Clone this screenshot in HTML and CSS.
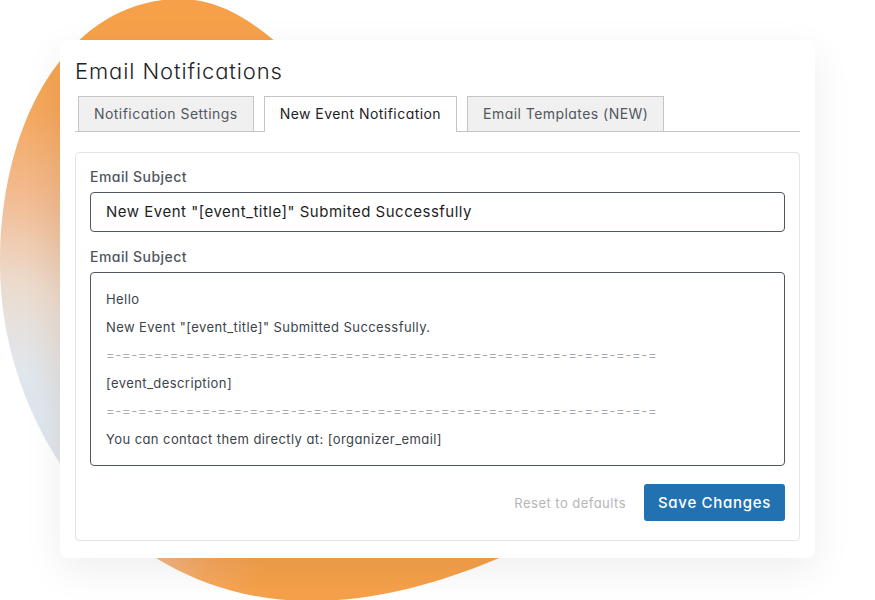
FILE: index.html
```html
<!DOCTYPE html>
<html lang="en">

<head>
    <meta charset="UTF-8">
    <meta name="viewport" content="width=device-width, initial-scale=1.0">
    <title>Email Notifications</title>

    <link rel="stylesheet" href="styles.css">
</head>

<body>
    <div class="page">
        <!-- the orange blob that sits behind the settings card -->
        <svg class="blob" viewBox="0 0 875 600" width="875" height="600" xmlns="http://www.w3.org/2000/svg">
            <defs>
                <radialGradient id="blob-fill" gradientUnits="userSpaceOnUse" cx="0" cy="430" r="280"
                    gradientTransform="translate(0 430) scale(1 1.4) translate(0 -430)">
                    <stop offset="0" stop-color="#dbe5ef" />
                    <stop offset="0.18" stop-color="#e0e6ec" />
                    <stop offset="0.38" stop-color="#ecdbcd" />
                    <stop offset="0.6" stop-color="#f2bb91" />
                    <stop offset="0.82" stop-color="#f5a85e" />
                    <stop offset="1" stop-color="#f6a14a" />
                </radialGradient>
            </defs>
            <path d="M180 -1 C75 -1 0 110 0 265 C0 420 110 600 310 601 C390 601 470 575 560 530 C680 450 600 250 420 150 C320 110 270 -1 180 -1 Z" fill="url(#blob-fill)" />
        </svg>

        <div class="card">
            <h1 class="card-title">Email Notifications</h1>

            <!-- tab strip, the active one joins the panel below -->
            <div class="tabs">
                <div class="tab">Notification Settings</div>
                <div class="tab tab-active">New Event Notification</div>
                <div class="tab">Email Templates (NEW)</div>
            </div>

            <div class="panel">
                <div class="field-label">Email Subject</div>
                <div class="field-input">New Event "[event_title]" Submited Successfully</div>

                <div class="field-label field-label-second">Email Subject</div>
                <div class="field-body">
                    <div class="body-line">Hello</div>
                    <div class="body-line">New Event "[event_title]" Submitted Successfully.</div>
                    <div class="body-line body-rule">=-=-=-=-=-=-=-=-=-=-=-=-=-=-=-=-=-=-=-=-=-=-=-=-=-=-=-=-=-=-=-=-=-=-=</div>
                    <div class="body-line">[event_description]</div>
                    <div class="body-line body-rule">=-=-=-=-=-=-=-=-=-=-=-=-=-=-=-=-=-=-=-=-=-=-=-=-=-=-=-=-=-=-=-=-=-=-=</div>
                    <div class="body-line">You can contact them directly at: [organizer_email]</div>
                </div>

                <div class="panel-footer">
                    <span class="reset-link">Reset to defaults</span>
                    <button class="save-button">Save Changes</button>
                </div>
            </div>
        </div>
    </div>
</body>

</html>
```

FILE: styles.css
```css
/* root styles */
body, html {
    margin: 0;
    height: 100%;
    background: #fff;
    font-family: "Inter", "Noto Sans", sans-serif;
    font-feature-settings: "cv11";
}

.page {
    position: relative;
    width: 875px;
    height: 600px;
    overflow: hidden;
    padding-top: 40px;
    box-sizing: border-box;
}

/* decorative background shape */
.blob {
    position: absolute;
    top: 0;
    left: 0;
    z-index: 0;
}

/* the white settings card */
.card {
    position: relative;
    z-index: 1;
    margin-left: 60px;
    width: 755px;
    height: 518px;
    box-sizing: border-box;
    padding: 16px 15px 0 15px;
    background: #fff;
    border-radius: 8px;
    box-shadow: 0 12px 40px rgba(0, 0, 0, .07);
}

.card-title {
    margin: 0;
    font-size: 22px;
    line-height: 30px;
    font-weight: 300;
    letter-spacing: .9px;
    color: #1d2327;
}

/* tabs */
.tabs {
    display: flex;
    gap: 10px;
    margin-top: 10px;
    padding-left: 3px;
    border-bottom: 1px solid #c3c4c7;
}

.tab {
    height: 34px;
    line-height: 34px;
    padding: 0 15px;
    border: 1px solid #c3c4c7;
    border-bottom: 0;
    background: #f0f0f1;
    color: #50575e;
    font-size: 14px;
    font-weight: 400;
    letter-spacing: .45px;
}

.tab-active {
    background: #fff;
    color: #1d2327;
    margin-bottom: -1px;
    height: 35px;
}

/* the bordered panel with the form */
.panel {
    margin-top: 20px;
    padding: 14px 14px 19px 14px;
    border: 1px solid #e2e4e7;
    border-radius: 4px;
}

.field-label {
    font-size: 14px;
    line-height: 20px;
    font-weight: 500;
    letter-spacing: .45px;
    color: #50575e;
    margin-bottom: 5px;
}

.field-label-second {
    margin-top: 15px;
    margin-bottom: 5px;
}

.field-input {
    height: 40px;
    box-sizing: border-box;
    padding: 0 15px;
    line-height: 38px;
    border: 1px solid #50575e;
    border-radius: 4px;
    font-size: 15px;
    letter-spacing: .5px;
    color: #1e1e1e;
}

.field-body {
    height: 194px;
    box-sizing: border-box;
    padding: 12px 15px;
    border: 1px solid #50575e;
    border-radius: 4px;
}

.body-line {
    font-size: 13px;
    line-height: 28px;
    letter-spacing: .42px;
    color: #3c434a;
    white-space: nowrap;
}

.body-rule {
    color: #a7aaad;
    letter-spacing: .68px;
}

/* bottom row with the buttons */
.panel-footer {
    display: flex;
    justify-content: flex-end;
    align-items: center;
    gap: 18px;
    margin-top: 18px;
}

.reset-link {
    font-size: 13px;
    letter-spacing: .47px;
    color: #b4b6b8;
}

.save-button {
    height: 37px;
    padding: 0 14px;
    border: 0;
    border-radius: 3px;
    background: #2271b1;
    color: #fff;
    font-family: inherit;
    font-feature-settings: inherit;
    font-size: 15px;
    font-weight: 500;
    letter-spacing: .7px;
}
```
